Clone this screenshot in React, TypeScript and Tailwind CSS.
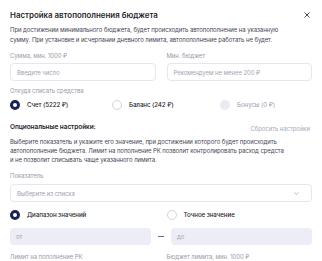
import React from "react";

function Radio({ state }: { state: "on" | "off" | "disabled" }) {
  if (state === "on")
    return <span className="block w-[10px] h-[10px] rounded-full border-[3px] border-[#1c2452] bg-white shrink-0" />;
  if (state === "disabled")
    return <span className="block w-[10px] h-[10px] rounded-full bg-[#e9eaf3] shrink-0" />;
  return <span className="block w-[10px] h-[10px] rounded-full border border-[#d3d4de] bg-white shrink-0" />;
}

export default function App() {
  return (
    <div
      className="w-[322px] h-[261px] overflow-hidden bg-white px-[10px] pt-[10px] tracking-[-0.08px]"
      style={{ fontFamily: "Inter, 'Noto Sans', sans-serif" }}
    >
      <div className="flex items-center justify-between h-[10px]">
        <h1 className="text-[7.9px] leading-[10px] font-semibold text-[#1f1f2b] tracking-normal">
          Настройка автопополнения бюджета
        </h1>
        <svg width="6" height="6" viewBox="0 0 6 6" className="mr-[2px]">
          <path d="M0.5 0.5L5.5 5.5M5.5 0.5L0.5 5.5" stroke="#3a3a46" strokeWidth="0.9" />
        </svg>
      </div>
      <p className="mt-[5px] text-[6px] leading-[9.5px] text-[#464654] whitespace-nowrap">
        При достижении минимального бюджета, будет происходить автопополнение на указанную
        <br />
        сумму. При установке и исчерпании дневного лимита, автопополнение работать не будет.
      </p>

      <div className="mt-[8px] grid grid-cols-2 gap-x-[11px]">
        <div>
          <div className="text-[6px] leading-[8px] text-[#9a9aa8]">Сумма, мин. 1000 ₽</div>
          <div className="mt-[3px] h-[18px] rounded-[4px] border border-[#e6e6ee] px-[6px] flex items-center text-[6px] text-[#a3a3b1]">
            Введите число
          </div>
        </div>
        <div>
          <div className="text-[6px] leading-[8px] text-[#9a9aa8]">Мин. бюджет</div>
          <div className="mt-[3px] h-[18px] rounded-[4px] border border-[#e6e6ee] px-[6px] flex items-center text-[6px] text-[#a3a3b1]">
            Рекомендуем не менее 200 ₽
          </div>
        </div>
      </div>

      <div className="mt-[6px] text-[6px] leading-[8px] text-[#9a9aa8]">Откуда списать средства</div>
      <div className="mt-[5px] flex items-center h-[10px] text-[6.2px] font-medium">
        <div className="flex items-center gap-[7px] w-[102px]">
          <Radio state="on" />
          <span className="text-[#1f1f2b]">Счет (5222 ₽)</span>
        </div>
        <div className="flex items-center gap-[7px] w-[108px]">
          <Radio state="off" />
          <span className="text-[#1f1f2b]">Баланс (242 ₽)</span>
        </div>
        <div className="flex items-center gap-[7px]">
          <Radio state="disabled" />
          <span className="text-[#9c9caa] font-normal">Бонусы (0 ₽)</span>
        </div>
      </div>

      <div className="mt-[13px] flex items-center justify-between h-[10px]">
        <span className="text-[6.5px] font-semibold text-[#1f1f2b]">Опциональные настройки:</span>
        <span className="text-[6px] text-[#a9a9bc] mr-[2px]">Сбросить настройки</span>
      </div>
      <p className="mt-[4px] text-[6px] leading-[9px] text-[#464654] whitespace-nowrap">
        Выберите показатель и укажите его значение, при достижении которого будет происходить
        <br />
        автопополнение бюджета. Лимит на пополнение РК позволит контролировать расход средста
        <br />
        и не позволит списывать чаще указанного лимита.
      </p>

      <div className="mt-[8px] text-[6px] leading-[8px] text-[#9a9aa8]">Показатель</div>
      <div className="mt-[4px] h-[18px] rounded-[4px] border border-[#e6e6ee] pl-[6px] pr-[12px] flex items-center justify-between text-[6px] text-[#a3a3b1]">
        <span>Выберите из списка</span>
        <svg width="5" height="3" viewBox="0 0 5 3">
          <path d="M0.5 0.5L2.5 2.5L4.5 0.5" stroke="#9a9aa8" strokeWidth="0.7" fill="none" />
        </svg>
      </div>

      <div className="mt-[8px] grid grid-cols-2 gap-x-[11px] h-[10px] text-[6.2px] font-medium text-[#1f1f2b]">
        <div className="flex items-center gap-[7px]">
          <Radio state="on" />
          <span>Диапазон значений</span>
        </div>
        <div className="flex items-center gap-[7px]">
          <Radio state="off" />
          <span>Точное значение</span>
        </div>
      </div>

      <div className="mt-[8px] flex items-center gap-[7px]">
        <div className="flex-1 h-[17px] rounded-[4px] bg-[#ededf7] px-[6px] flex items-center text-[6px] text-[#a3a3b1]">
          от
        </div>
        <div className="w-[6px] h-[0.8px] bg-[#6c6c7a]" />
        <div className="flex-1 h-[17px] rounded-[4px] bg-[#ededf7] px-[6px] flex items-center text-[6px] text-[#a3a3b1]">
          до
        </div>
      </div>

      <div className="mt-[8px] grid grid-cols-2 gap-x-[11px] text-[6px] leading-[8px] text-[#9a9aa8]">
        <div>Лимит на пополнение РК</div>
        <div>Бюджет лимита, мин. 1000 ₽</div>
      </div>
    </div>
  );
}
